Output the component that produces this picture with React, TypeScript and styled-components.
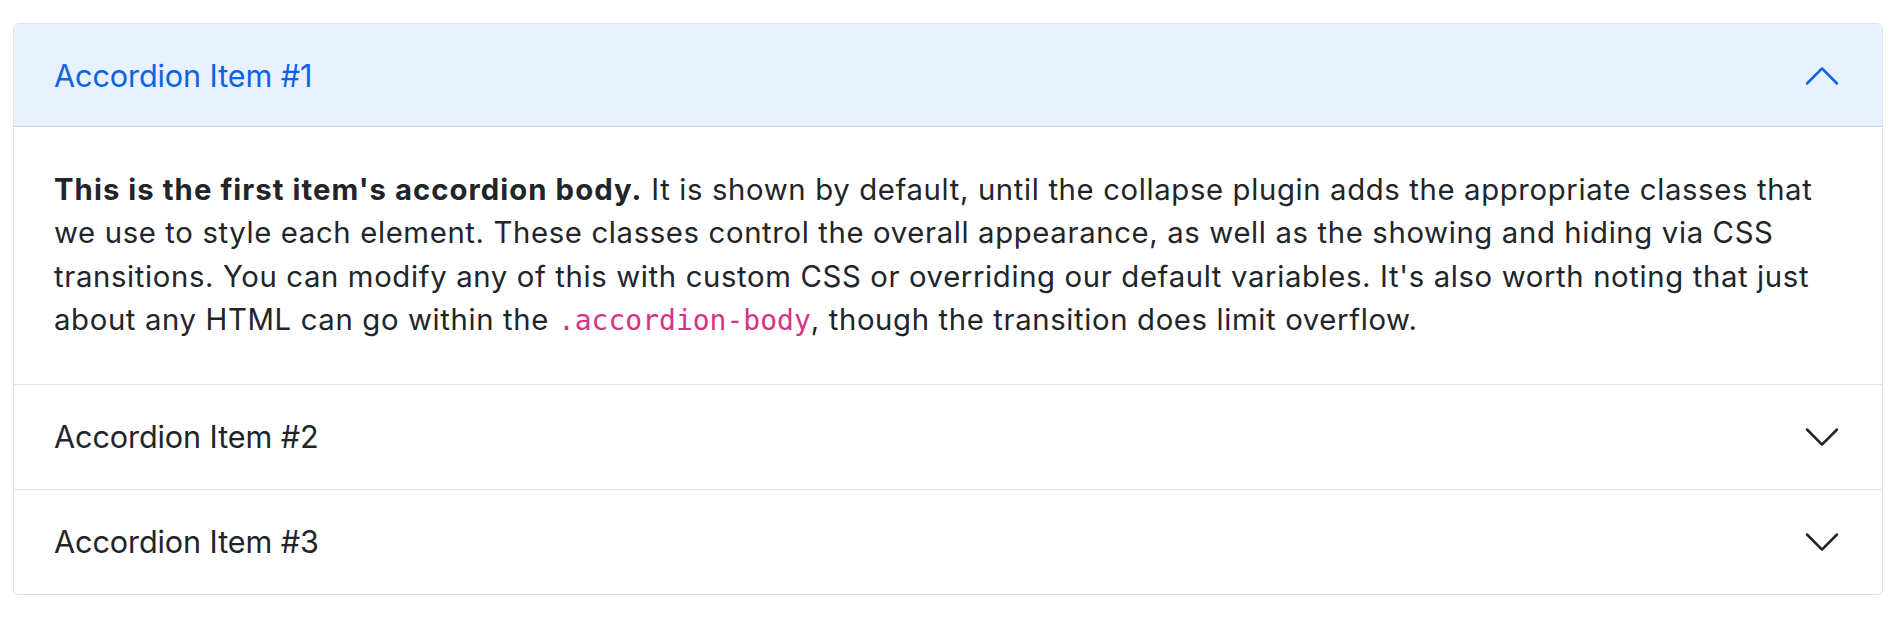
import React, { useState } from "react";
import styled, { createGlobalStyle } from "styled-components";

const Global = createGlobalStyle`
  html, body { margin: 0; padding: 0; background: #fff; }
  body { font-family: Inter, "Noto Sans", "Liberation Sans", sans-serif; color: #212529; }
`;

const Page = styled.div`
  padding: 23px 17px 25px 13px;
`;

const Accordion = styled.div`
  border: 1px solid #dee2e6;
  border-radius: 6px;
  overflow: hidden;
  background: #fff;
`;

const Item = styled.div<{ $first?: boolean }>`
  border-top: ${(p) => (p.$first ? "none" : "1px solid #dee2e6")};
`;

const Header = styled.button<{ $open?: boolean }>`
  display: flex;
  align-items: center;
  width: 100%;
  box-sizing: border-box;
  height: ${(p) => (p.$open ? "103px" : "104px")};
  padding: 0 40px 0 40px;
  border: none;
  margin: 0;
  text-align: left;
  cursor: pointer;
  font-family: inherit;
  font-size: 30.6px;
  line-height: 1.5;
  letter-spacing: -0.1px;
  color: ${(p) => (p.$open ? "#0c63e4" : "#212529")};
  background: ${(p) => (p.$open ? "#e7f1ff" : "#fff")};
  box-shadow: ${(p) => (p.$open ? "inset 0 -1px 0 rgba(0,0,0,0.125)" : "none")};
`;

const Title = styled.span`
  flex: 1;
`;

const Chevron = styled.svg<{ $open?: boolean }>`
  width: 40px;
  height: 40px;
  flex-shrink: 0;
  transform: ${(p) => (p.$open ? "rotate(180deg)" : "none")};
  color: ${(p) => (p.$open ? "#0c63e4" : "#212529")};
`;

const Body = styled.div`
  padding: 41px 40px 42px 40px;
  font-size: 29.3px;
  line-height: 43.3px;
  letter-spacing: 0.64px;
`;

const Lead = styled.strong`
  font-weight: 700;
  letter-spacing: 1.05px;
`;

const Code = styled.code`
  font-family: "DejaVu Sans Mono", "Liberation Mono", monospace;
  font-size: 28px;
  letter-spacing: 0;
  color: #d63384;
`;

const ChevronIcon = ({ open }: { open?: boolean }) => (
  <Chevron $open={open} viewBox="0 0 16 16" fill="currentColor">
    <path
      fillRule="evenodd"
      d="M1.646 4.646a.5.5 0 0 1 .708 0L8 10.293l5.646-5.647a.5.5 0 0 1 .708.708l-6 6a.5.5 0 0 1-.708 0l-6-6a.5.5 0 0 1 0-.708z"
    />
  </Chevron>
);

export default function App() {
  const [open, setOpen] = useState<number>(1);
  const items = [1, 2, 3];
  return (
    <Page>
      <Global />
      <Accordion>
        {items.map((n) => (
          <Item key={n} $first={n === 1}>
            <Header $open={open === n} onClick={() => setOpen(open === n ? 0 : n)}>
              <Title>Accordion Item #{n}</Title>
              <ChevronIcon open={open === n} />
            </Header>
            {open === n && (
              <Body>
                <Lead>This is the first item's accordion body.</Lead> It is shown by default, until the
                collapse plugin adds the appropriate classes that we use to style each element. These classes
                control the overall appearance, as well as the showing and hiding via CSS transitions. You can
                modify any of this with custom CSS or overriding our default variables. It's also worth noting
                that just about any HTML can go within the <Code>.accordion-body</Code>, though the transition
                does limit overflow.
              </Body>
            )}
          </Item>
        ))}
      </Accordion>
    </Page>
  );
}
